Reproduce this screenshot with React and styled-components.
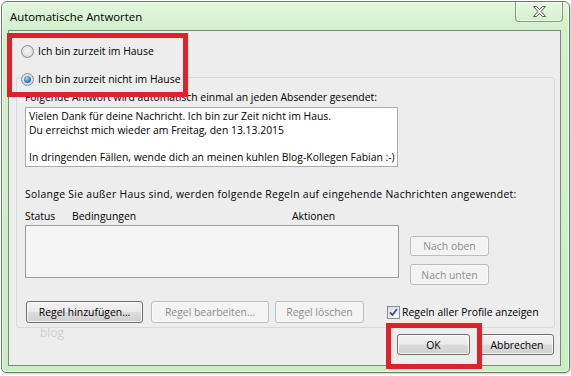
import React from 'react';
import styled, { createGlobalStyle } from 'styled-components';

const GlobalStyle = createGlobalStyle`
  html, body { margin: 0; padding: 0; background: #fff; }
  body {
    font-family: "Open Sans", "Noto Sans", sans-serif;
    font-size: 10.4px;
    color: #000;
  }
`;

const Screen = styled.div`
  width: 571px;
  height: 376px;
  box-sizing: border-box;
  padding: 1px 0 0 1px;
  background: #fff;
  overflow: hidden;
`;

const Window = styled.div`
  position: relative;
  width: 569px;
  height: 372px;
  box-sizing: border-box;
  border: 1px solid #6b7a6b;
  border-radius: 6px 6px 5px 5px;
  background: linear-gradient(#e3f6dd, #d2f0cb 28px, #cbedc4);
  box-shadow: inset 0 0 0 1px rgba(255, 255, 255, 0.55), 1px 1px 2px rgba(0, 0, 0, 0.2);
  padding: 0 8px 6px 6px;
  display: flex;
  flex-direction: column;
`;

const TitleBar = styled.div`
  flex: 0 0 28px;
  display: flex;
  align-items: flex-start;
  justify-content: space-between;
`;

const Title = styled.div`
  padding: 7px 0 0 2px;
  font-size: 11.4px;
  line-height: 16px;
  color: #000;
`;

const CloseButton = styled.div`
  width: 48px;
  height: 20px;
  margin-right: -2px;
  box-sizing: border-box;
  border: 1px solid rgba(60, 80, 60, 0.55);
  border-top: none;
  border-radius: 0 0 4px 4px;
  background: linear-gradient(#e6f7e0, #d4f0cd);
  box-shadow: inset 0 0 0 1px rgba(255, 255, 255, 0.5);
  display: grid;
  place-items: center;
`;

const Client = styled.div`
  flex: 1 1 auto;
  min-height: 0;
  border: 1px solid #7a897a;
  background: #ededed;
  padding: 12px 5px 0 7px;
  display: flex;
  flex-direction: column;
`;

const OptionRow = styled.label`
  display: flex;
  align-items: center;
  gap: 4px;
  height: 16px;
  padding-left: ${p => p.$indent || 0}px;
  line-height: 16px;
  white-space: nowrap;
`;

const Radio = styled.span`
  width: 13px;
  height: 13px;
  box-sizing: border-box;
  border-radius: 50%;
  border: 1px solid #8a8c8e;
  background: radial-gradient(circle at 50% 45%, #f4f4f4 0, #e2e2e2 55%, #cfcfcf 80%, #f6f6f6 100%);
  display: inline-grid;
  place-items: center;

  &::after {
    content: '';
    width: 7px;
    height: 7px;
    border-radius: 50%;
    display: ${p => (p.$checked ? 'block' : 'none')};
    background: radial-gradient(circle at 40% 35%, #aee0fb 0, #3b8ed4 45%, #184f8f 100%);
  }
`;

const Group = styled.fieldset`
  margin: 8px 0 0 0;
  padding: 0 8px 4px 8px;
  border: 1px solid #d3dbe0;
  border-radius: 3px;
  min-width: 0;
`;

const Legend = styled.legend`
  padding: 4px 3px 0 0;
  margin-left: -4px;
`;

const Label = styled.div`
  line-height: 15px;
  margin-top: ${p => p.$top || 0}px;
  letter-spacing: ${p => p.$spacing || 0}px;
  white-space: nowrap;
`;

const MessageBox = styled.div`
  margin-top: 2px;
  width: 373px;
  height: 60px;
  box-sizing: border-box;
  border: 1px solid #a9abb0;
  background: #fff;
  padding: 2px 3px;
  line-height: 13.6px;
  white-space: pre;
  overflow: hidden;
`;

const Columns = styled.div`
  display: flex;
  margin-top: 7px;
  line-height: 15px;
`;

const Column = styled.span`
  width: ${p => p.$w}px;
`;

const RulesArea = styled.div`
  display: flex;
  align-items: flex-start;
  gap: 11px;
  margin-top: 1px;
`;

const RulesList = styled.div`
  width: 374px;
  height: 53px;
  box-sizing: border-box;
  border: 1px solid #9c9ea2;
  background: #f5f5f5;
`;

const SideButtons = styled.div`
  display: flex;
  flex-direction: column;
  gap: 8px;
  padding-top: 11px;
`;

const Button = styled.button`
  width: ${p => p.$w}px;
  height: ${p => p.$h || 22}px;
  box-sizing: border-box;
  padding: 0;
  font-family: inherit;
  font-size: 10.4px;
  white-space: nowrap;
  color: ${p => (p.disabled ? '#8d8d8d' : '#000')};
  border: 1px solid ${p => (p.disabled ? '#b9bcbf' : '#707070')};
  border-radius: 3px;
  background: ${p =>
    p.disabled
      ? '#f3f3f3'
      : 'linear-gradient(#f2f2f2 0%, #ebebeb 48%, #dcdcdc 52%, #cfcfcf 100%)'};
  box-shadow: inset 0 0 0 1px rgba(255, 255, 255, ${p => (p.disabled ? 0.4 : 0.75)});
`;

const ActionRow = styled.div`
  display: flex;
  align-items: center;
  margin-top: 16px;
  padding-left: 1px;
  white-space: nowrap;
`;

const Spacer = styled.span`
  flex: 0 0 ${p => p.$w}px;
`;

const Check = styled.span`
  flex: 0 0 13px;
  height: 13px;
  box-sizing: border-box;
  border: 1px solid #8a8c8e;
  background: linear-gradient(135deg, #dcdcdc, #fbfbfb);
  display: inline-grid;
  place-items: center;
  margin-right: 2px;
`;

const Footer = styled.div`
  display: flex;
  justify-content: flex-end;
  gap: 10px;
  margin-top: 6px;
  padding-right: 1px;
`;

const Watermark = styled.div`
  position: absolute;
  left: 38px;
  top: 322px;
  font-size: 12px;
  color: #cfcfcf;
`;

const Highlight = styled.div`
  position: absolute;
  left: ${p => p.$x}px;
  top: ${p => p.$y}px;
  width: ${p => p.$w}px;
  height: ${p => p.$h}px;
  box-sizing: border-box;
  border: 5px solid #e2202a;
  pointer-events: none;
`;

const CloseGlyph = () => (
  <svg width="13" height="11" viewBox="0 0 13 11">
    <polygon
      points="0.5,0.5 3.5,0.5 6.5,3.5 9.5,0.5 12.5,0.5 8,5.5 12.5,10.5 9.5,10.5 6.5,7.5 3.5,10.5 0.5,10.5 5,5.5"
      fill="#fafafa"
      stroke="#555"
      strokeWidth="1"
      strokeLinejoin="round"
    />
  </svg>
);

const CheckMark = () => (
  <svg width="9" height="9" viewBox="0 0 9 9">
    <path d="M1 4.5 L3.5 7 L8 1" fill="none" stroke="#3d4f86" strokeWidth="1.8" />
  </svg>
);

const message = `Vielen Dank für deine Nachricht. Ich bin zur Zeit nicht im Haus.
Du erreichst mich wieder am Freitag, den 13.13.2015

In dringenden Fällen, wende dich an meinen kuhlen Blog-Kollegen Fabian :-)`;

export default function App() {
  return (
    <Screen>
      <GlobalStyle />
      <Window>
        <TitleBar>
          <Title>Automatische Antworten</Title>
          <CloseButton>
            <CloseGlyph />
          </CloseButton>
        </TitleBar>
        <Client>
          <OptionRow $indent={5}>
            <Radio />
            Ich bin zurzeit im Hause
          </OptionRow>
          <Group>
            <Legend>
              <OptionRow>
                <Radio $checked />
                Ich bin zurzeit nicht im Hause
              </OptionRow>
            </Legend>
            <Label $top={3}>Folgende Antwort wird automatisch einmal an jeden Absender gesendet:</Label>
            <MessageBox>{message}</MessageBox>
            <Label $top={20} $spacing={0.3}>
              Solange Sie außer Haus sind, werden folgende Regeln auf eingehende Nachrichten angewendet:
            </Label>
            <Columns>
              <Column $w={47}>Status</Column>
              <Column $w={220}>Bedingungen</Column>
              <Column>Aktionen</Column>
            </Columns>
            <RulesArea>
              <RulesList />
              <SideButtons>
                <Button $w={79} $h={20} disabled>Nach oben</Button>
                <Button $w={79} $h={21} disabled>Nach unten</Button>
              </SideButtons>
            </RulesArea>
            <ActionRow>
              <Button $w={117}>Regel hinzufügen…</Button>
              <Spacer $w={8} />
              <Button $w={118} disabled>Regel bearbeiten…</Button>
              <Spacer $w={6} />
              <Button $w={89} disabled>Regel löschen</Button>
              <Spacer $w={23} />
              <Check>
                <CheckMark />
              </Check>
              Regeln aller Profile anzeigen
            </ActionRow>
          </Group>
          <Footer>
            <Button $w={73} $h={21}>OK</Button>
            <Button $w={74} $h={21}>Abbrechen</Button>
          </Footer>
        </Client>
        <Watermark>blog</Watermark>
        <Highlight $x={5} $y={31} $w={181} $h={64} />
        <Highlight $x={384} $y={321} $w={96} $h={46} />
      </Window>
    </Screen>
  );
}
